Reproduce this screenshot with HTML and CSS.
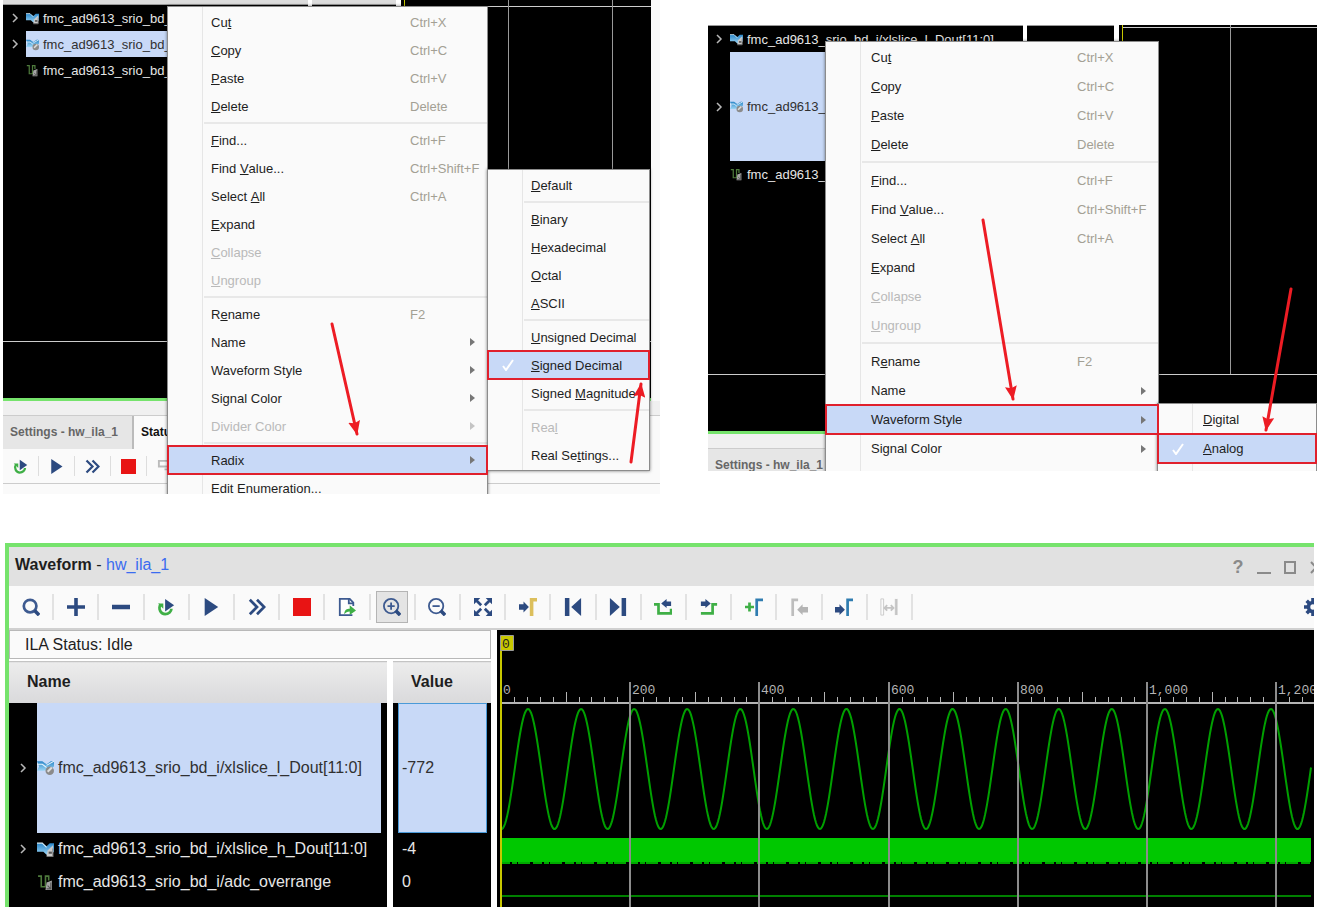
FILE: index.html
```html
<!DOCTYPE html>
<html lang="en">
<head>
    <meta charset="UTF-8">
    <meta name="viewport" content="width=device-width, initial-scale=1.0">
    <title>Waveform - hw_ila_1</title>
    <link rel="stylesheet" href="styles.css">
</head>
<body>
    <!-- Shared icons -->
    <svg class="defs" width="0" height="0" aria-hidden="true">
        <defs>
            <marker id="head" viewBox="0 0 14 12" markerWidth="14" markerHeight="12" refX="13" refY="6" orient="auto" markerUnits="userSpaceOnUse">
                <path d="M0 0 14 6 0 12 2 6z" fill="#ed1c24"/>
            </marker>
            <linearGradient id="blue" x1="0" y1="0" x2="0" y2="1">
                <stop offset="0" stop-color="#2a86c8"/>
                <stop offset="1" stop-color="#9ad4f4"/>
            </linearGradient>
        </defs>
        <symbol id="bus" viewBox="0 0 16 16">
            <path d="M0 2h5l4 3 3-3h4v8l-3 3H9L6 10H0z" fill="url(#blue)"/>
            <path d="M0 2h5l4 4" fill="none" stroke="#d8effa"/>
            <path d="M10 9l5-5v10h-6z" fill="#c9c9c9"/>
            <path d="M9 14.500h6V7" fill="none" stroke="#777"/>
            <path d="M11 11h3" stroke="#555" stroke-width="2"/>
        </symbol>
        <symbol id="bus-on" viewBox="0 0 16 16">
            <path d="M0 2h5l4 3 4-3h3v5l-5 3-5 1H0l2-4z" fill="url(#blue)"/>
            <path d="M0 5h5l4 3M9 6l7-4" fill="none" stroke="#e6f4fc"/>
            <circle cx="12" cy="11" r="4" fill="#8b8b8b"/>
            <path d="M10 12l4-4" stroke="#ddd" stroke-width="2"/>
        </symbol>
        <symbol id="net" viewBox="0 0 16 16">
            <path d="M1 2h3v10h4V2h3v4" fill="none" stroke="#4e7a3c" stroke-width="1.500"/>
            <path d="M9 8l5-2v9H8z" fill="#a6a6a6"/>
            <path d="M10 11l3 3M13 8v6H9" stroke="#555" fill="none"/>
        </symbol>
        <symbol id="chev" viewBox="0 0 8 12">
            <path d="M2 2l4 4-4 4" fill="none" stroke="#b8b8b8" stroke-width="1.500"/>
        </symbol>
        <symbol id="check" viewBox="0 0 12 12">
            <path d="M1 7l3 4 7-10" fill="none" stroke="#fff" stroke-width="2"/>
        </symbol>
        <symbol id="rerun" viewBox="0 0 20 20">
            <path d="M4 7C1 12 4 18 9 18c4 0 7-3 7-6" fill="none" stroke="#3faf46" stroke-width="3"/>
            <path d="M1 6h6v6z" fill="#3faf46"/>
            <path d="M9 1l10 7-10 7z" fill="#2c4a80"/>
        </symbol>
        <symbol id="run" viewBox="0 0 20 20"><path d="M3 0l15 10L3 20z" fill="#2c4a80"/></symbol>
        <symbol id="fast" viewBox="0 0 20 20">
            <path d="M2 2l8 8-8 8M10 2l8 8-8 8" fill="none" stroke="#2c4a80" stroke-width="3"/>
        </symbol>
        <symbol id="stop" viewBox="0 0 20 20"><path d="M0 0h20v20H0z" fill="#e81414"/></symbol>
    </svg>

    <main class="page">
        <div class="shots">
            <!-- Radix menu -->
            <section class="shot shot-radix">
                <div class="scope">
                    <div class="scope-body">
                        <div class="names">
                            <div class="col-head"></div>
                            <div class="signal">
                                <button class="expand" aria-label="Expand"><svg><use href="#chev"/></svg></button>
                                <div class="label"><svg><use href="#bus"/></svg>fmc_ad9613_srio_bd_i</div>
                            </div>
                            <div class="signal">
                                <button class="expand" aria-label="Expand"><svg><use href="#chev"/></svg></button>
                                <div class="label selected"><svg><use href="#bus-on"/></svg>fmc_ad9613_srio_bd_i</div>
                            </div>
                            <div class="signal">
                                <span class="expand"></span>
                                <div class="label"><svg><use href="#net"/></svg>fmc_ad9613_srio_bd_i</div>
                            </div>
                        </div>
                        <div class="values"><div class="col-head"></div></div>
                        <svg class="trace">
                            <path d="M3 6.500H300" stroke="#ccc"/>
                            <path d="M107.500 0V341M211.500 0V341" stroke="#999"/>
                            <path d="M3.500 0V341" stroke="#c8c800"/>
                        </svg>
                    </div>
                    <div class="scope-foot"></div>
                </div>
                <div class="splitter"></div>
                <div class="tabs">
                    <a class="tab" href="#settings">Settings - hw_ila_1</a>
                    <a class="tab active" href="#status">Status - hw_ila_1</a>
                </div>
                <div class="mini-bar">
                    <button aria-label="Run trigger"><svg><use href="#rerun"/></svg></button>
                    <button aria-label="Run"><svg><use href="#run"/></svg></button>
                    <button aria-label="Run immediate"><svg><use href="#fast"/></svg></button>
                    <button aria-label="Stop"><svg><use href="#stop"/></svg></button>
                    <button aria-label="Export"><svg viewBox="0 0 16 16"><path d="M2 2h10v6H2zM8 11h6" fill="none" stroke="#bbb" stroke-width="2"/></svg></button>
                </div>

                <div class="menu menu-radix" role="menu">
                    <button role="menuitem">Cu<u>t</u><kbd>Ctrl+X</kbd></button>
                    <button role="menuitem"><u>C</u>opy<kbd>Ctrl+C</kbd></button>
                    <button role="menuitem"><u>P</u>aste<kbd>Ctrl+V</kbd></button>
                    <button role="menuitem"><u>D</u>elete<kbd>Delete</kbd></button>
                    <hr>
                    <button role="menuitem"><u>F</u>ind...<kbd>Ctrl+F</kbd></button>
                    <button role="menuitem">Find&nbsp;<u>V</u>alue...<kbd>Ctrl+Shift+F</kbd></button>
                    <button role="menuitem">Select&nbsp;<u>A</u>ll<kbd>Ctrl+A</kbd></button>
                    <button role="menuitem"><u>E</u>xpand</button>
                    <button role="menuitem" disabled><u>C</u>ollapse</button>
                    <button role="menuitem" disabled><u>U</u>ngroup</button>
                    <hr>
                    <button role="menuitem">R<u>e</u>name<kbd>F2</kbd></button>
                    <button role="menuitem">Name<i class="more"></i></button>
                    <button role="menuitem">Waveform Style<i class="more"></i></button>
                    <button role="menuitem">Signal Color<i class="more"></i></button>
                    <button role="menuitem" disabled>Divider Color<i class="more"></i></button>
                    <hr>
                    <button role="menuitem" class="marked">Radix<i class="more"></i></button>
                    <button role="menuitem">Edit Enumeration...</button>
                </div>
                <div class="menu submenu-radix" role="menu">
                    <button role="menuitem"><u>D</u>efault</button>
                    <hr>
                    <button role="menuitem"><u>B</u>inary</button>
                    <button role="menuitem"><u>H</u>exadecimal</button>
                    <button role="menuitem"><u>O</u>ctal</button>
                    <button role="menuitem"><u>A</u>SCII</button>
                    <hr>
                    <button role="menuitem"><u>U</u>nsigned Decimal</button>
                    <button role="menuitem" class="marked"><svg class="tick"><use href="#check"/></svg><u>S</u>igned Decimal</button>
                    <button role="menuitem">Signed&nbsp;<u>M</u>agnitude</button>
                    <hr>
                    <button role="menuitem" disabled>Rea<u>l</u></button>
                    <button role="menuitem">Real Se<u>t</u>tings...</button>
                </div>
                <svg class="arrows">
                    <path d="M329 324L354 434"/>
                    <path d="M628 462L638 384"/>
                </svg>
            </section>

            <!-- Waveform Style menu -->
            <section class="shot shot-style">
                <div class="scope">
                    <div class="scope-body">
                        <div class="names">
                            <div class="col-head"></div>
                            <div class="signal">
                                <button class="expand" aria-label="Expand"><svg><use href="#chev"/></svg></button>
                                <div class="label"><svg><use href="#bus"/></svg>fmc_ad9613_srio_bd_i/xlslice_l_Dout[11:0]</div>
                            </div>
                            <div class="signal tall">
                                <button class="expand" aria-label="Expand"><svg><use href="#chev"/></svg></button>
                                <div class="label selected"><svg><use href="#bus-on"/></svg>fmc_ad9613_srio_bd_i</div>
                            </div>
                            <div class="signal">
                                <span class="expand"></span>
                                <div class="label"><svg><use href="#net"/></svg>fmc_ad9613_srio_bd_i</div>
                            </div>
                        </div>
                        <div class="values"><div class="col-head"></div></div>
                        <svg class="trace">
                            <path d="M3 2.500H300" stroke="#ccc"/>
                            <path d="M111.500 0V349" stroke="#999"/>
                            <path d="M3.500 0V349" stroke="#c8c800"/>
                        </svg>
                    </div>
                    <div class="scope-foot"></div>
                </div>
                <div class="splitter"></div>
                <div class="tabs">
                    <a class="tab" href="#settings">Settings - hw_ila_1</a>
                </div>

                <div class="menu menu-style" role="menu">
                    <button role="menuitem">Cu<u>t</u><kbd>Ctrl+X</kbd></button>
                    <button role="menuitem"><u>C</u>opy<kbd>Ctrl+C</kbd></button>
                    <button role="menuitem"><u>P</u>aste<kbd>Ctrl+V</kbd></button>
                    <button role="menuitem"><u>D</u>elete<kbd>Delete</kbd></button>
                    <hr>
                    <button role="menuitem"><u>F</u>ind...<kbd>Ctrl+F</kbd></button>
                    <button role="menuitem">Find&nbsp;<u>V</u>alue...<kbd>Ctrl+Shift+F</kbd></button>
                    <button role="menuitem">Select&nbsp;<u>A</u>ll<kbd>Ctrl+A</kbd></button>
                    <button role="menuitem"><u>E</u>xpand</button>
                    <button role="menuitem" disabled><u>C</u>ollapse</button>
                    <button role="menuitem" disabled><u>U</u>ngroup</button>
                    <hr>
                    <button role="menuitem">R<u>e</u>name<kbd>F2</kbd></button>
                    <button role="menuitem">Name<i class="more"></i></button>
                    <button role="menuitem" class="marked">Waveform Style<i class="more"></i></button>
                    <button role="menuitem">Signal Color<i class="more"></i></button>
                </div>
                <div class="menu submenu-style" role="menu">
                    <button role="menuitem"><u>D</u>igital</button>
                    <button role="menuitem" class="marked"><svg class="tick"><use href="#check"/></svg><u>A</u>nalog</button>
                </div>
                <svg class="arrows">
                    <path d="M275 195L305 374"/>
                    <path d="M583 264L558 405"/>
                </svg>
            </section>
        </div>

        <!-- Waveform window -->
        <section class="window">
            <header class="titlebar">
                <h1>Waveform <span>-</span> <a href="#hw_ila_1">hw_ila_1</a></h1>
                <div class="win-buttons">
                    <button aria-label="Help">?</button>
                    <button aria-label="Minimize"><svg viewBox="0 0 14 14"><path d="M0 12h14" stroke-width="2"/></svg></button>
                    <button aria-label="Maximize"><svg viewBox="0 0 14 14"><path d="M2 1h10v11H2z" stroke-width="2"/></svg></button>
                    <button aria-label="Close"><svg viewBox="0 0 14 14"><path d="M2 1l10 11M12 1L2 12" stroke-width="2"/></svg></button>
                </div>
            </header>
            <div class="toolbar">
                <div class="tools">
                    <button aria-label="Find"><svg viewBox="0 0 20 20"><circle cx="9" cy="9" r="7" fill="none" stroke="#3d5a90" stroke-width="3"/><path d="M14 14l5 5" stroke="#2c4a80" stroke-width="4"/></svg></button>
                    <button aria-label="Add"><svg viewBox="0 0 20 20"><path d="M0 10h20M10 0v20" stroke="#2c4a80" stroke-width="4"/></svg></button>
                    <button aria-label="Remove"><svg viewBox="0 0 20 20"><path d="M0 10h20" stroke="#2c4a80" stroke-width="5"/></svg></button>
                    <button aria-label="Run trigger"><svg><use href="#rerun"/></svg></button>
                    <button aria-label="Run"><svg><use href="#run"/></svg></button>
                    <button aria-label="Run immediate"><svg><use href="#fast"/></svg></button>
                    <button aria-label="Stop"><svg><use href="#stop"/></svg></button>
                    <button aria-label="Export"><svg viewBox="0 0 20 20"><path d="M17 9V5l-4-4H2v18h14" fill="#fff" stroke="#3d5a90" stroke-width="2"/><path d="M12 1v5h5" fill="none" stroke="#3d5a90" stroke-width="2"/><path d="M7 18c0-5 3-6 6-6V8l7 6-7 5v-4c-3 0-4 1-6 3z" fill="#3faf46"/></svg></button>
                    <button aria-label="Zoom in" class="pressed"><svg viewBox="0 0 20 20"><circle cx="9" cy="9" r="8" fill="none" stroke="#3d5a90" stroke-width="2"/><path d="M14 14l5 5" stroke="#2c4a80" stroke-width="4"/><path d="M5 9h8M9 5v8" stroke="#3d5a90" stroke-width="2"/></svg></button>
                    <button aria-label="Zoom out"><svg viewBox="0 0 20 20"><circle cx="9" cy="9" r="8" fill="none" stroke="#3d5a90" stroke-width="2"/><path d="M14 14l5 5" stroke="#2c4a80" stroke-width="4"/><path d="M5 9h8" stroke="#3d5a90" stroke-width="2"/></svg></button>
                    <button aria-label="Zoom fit"><svg viewBox="0 0 20 20"><path d="M0 0h7L0 7zM20 0v7l-7-7zM0 20v-7l7 7zM20 20h-7l7-7z" fill="#2c4a80"/><path d="M3 3l5 5M17 3l-5 5M3 17l5-5M17 17l-5-5" stroke="#2c4a80" stroke-width="3"/></svg></button>
                    <button aria-label="Go to trigger"><svg viewBox="0 0 20 20"><path d="M0 7h5V4l6 6-6 6v-3H0z" fill="#2c4a80"/><path d="M14 20V2h6" fill="none" stroke="#dcbf5c" stroke-width="4"/></svg></button>
                    <button aria-label="First sample"><svg viewBox="0 0 20 20"><path d="M1 0h5v20H1zM19 0v20L8 10z" fill="#2c4a80"/></svg></button>
                    <button aria-label="Last sample"><svg viewBox="0 0 20 20"><path d="M14 0h5v20h-5zM1 0v20l11-10z" fill="#2c4a80"/></svg></button>
                    <button aria-label="Previous transition"><svg viewBox="0 0 20 20"><path d="M0 7h5v10h14v-5" fill="none" stroke="#3faf46" stroke-width="3"/><path d="M19 4h-5V1L8 6l6 5V9h5z" fill="#2c4a80"/></svg></button>
                    <button aria-label="Next transition"><svg viewBox="0 0 20 20"><path d="M1 17h13V7h5" fill="none" stroke="#3faf46" stroke-width="3"/><path d="M1 4h5V1l6 5-6 5V9H1z" fill="#2c4a80"/></svg></button>
                    <button aria-label="Add marker"><svg viewBox="0 0 20 20"><path d="M0 10h10M5 5v10" stroke="#3faf46" stroke-width="3"/><path d="M13 20V2h7" fill="none" stroke="#2f7cb0" stroke-width="3"/></svg></button>
                    <button aria-label="Previous marker" disabled><svg viewBox="0 0 20 20"><path d="M3 20V2h6" fill="none" stroke="#bdbdbd" stroke-width="3"/><path d="M20 10h-6V7l-6 6 6 6v-3h6z" fill="#b4b4b4"/></svg></button>
                    <button aria-label="Next marker"><svg viewBox="0 0 20 20"><path d="M0 10h5V7l6 6-6 6v-3H0z" fill="#2c4a80"/><path d="M14 20V2h6" fill="none" stroke="#2f7cb0" stroke-width="3"/></svg></button>
                    <button aria-label="Swap markers" disabled><svg viewBox="0 0 20 20"><path d="M1 1h3v18H1zM17 1v18M19 1v18" fill="none" stroke="#c8c8c8"/><path d="M6 11h9M8 8l-3 3 3 3M12 8l3 3-3 3M18 1v18" fill="none" stroke="#c4c4c4" stroke-width="2"/></svg></button>
                </div>
                <button class="gear" aria-label="Settings"><svg viewBox="0 0 20 20"><circle cx="10" cy="10" r="5" fill="none" stroke="#2c4a80" stroke-width="4"/><path d="M10 0v4M10 16v4M0 10h4M16 10h4M3 3l3 3M14 14l3 3M3 17l3-3M14 6l3-3" stroke="#2c4a80" stroke-width="4"/></svg></button>
            </div>
            <div class="viewer">
                <div class="side">
                    <p class="status">ILA Status: Idle</p>
                    <table class="signals">
                        <thead>
                            <tr><th class="name">Name</th><th>Value</th></tr>
                        </thead>
                        <tbody>
                            <tr class="analog">
                                <td class="name">
                                    <div class="signal">
                                        <button class="expand" aria-label="Expand"><svg><use href="#chev"/></svg></button>
                                        <div class="label selected"><svg><use href="#bus-on"/></svg>fmc_ad9613_srio_bd_i/xlslice_l_Dout[11:0]</div>
                                    </div>
                                </td>
                                <td><div class="value selected">-772</div></td>
                            </tr>
                            <tr>
                                <td class="name">
                                    <div class="signal">
                                        <button class="expand" aria-label="Expand"><svg><use href="#chev"/></svg></button>
                                        <div class="label"><svg><use href="#bus"/></svg>fmc_ad9613_srio_bd_i/xlslice_h_Dout[11:0]</div>
                                    </div>
                                </td>
                                <td><div class="value">-4</div></td>
                            </tr>
                            <tr>
                                <td class="name">
                                    <div class="signal">
                                        <span class="expand"></span>
                                        <div class="label"><svg><use href="#net"/></svg>fmc_ad9613_srio_bd_i/adc_overrange</div>
                                    </div>
                                </td>
                                <td><div class="value">0</div></td>
                            </tr>
                            <tr class="rest"><td class="name"></td><td></td></tr>
                        </tbody>
                    </table>
                </div>
                <svg class="plot" id="plot"></svg>
            </div>
        </section>
    </main>

    <script src="plot.js"></script>
</body>
</html>
```
FILE: styles.css
```css
* {
    box-sizing: border-box;
}
body {
    margin: 0;
    background: #fff;
    font-family: "Liberation Sans", Arial, sans-serif;
    font-size: 13px;
    color: #1e1e1e;
}
button {
    padding: 0;
    border: none;
    background: none;
    font: inherit;
    color: inherit;
}
a {
    text-decoration: none;
}
.defs {
    position: absolute;
}
.page {
    padding: 0 4px 0 3px;
}
.shots {
    display: grid;
    grid-template-columns: 657fr 609fr;
    gap: 48px;
}
.shot {
    position: relative;
    overflow: hidden;
    background: #fafafa;
}
.shot-radix {
    height: 494px;
}
.shot-style {
    height: 446px;
    margin-top: 25px;
}

/* black signal area */
.scope {
    background: #000;
    border-bottom: 3px solid #76e36c;
}
.shot-radix .scope {
    margin-right: 9px;
}
.scope-body {
    display: flex;
    height: 342px;
    border-bottom: 1px solid #ccc;
}
.shot-style .scope-body {
    height: 350px;
}
.scope-foot {
    height: 56px;
}
.names {
    flex: 0 0 309px;
    border-right: 4px solid #fff;
    overflow: hidden;
}
.values {
    flex: 0 0 89px;
    border-right: 5px solid #fff;
}
.shot-style .names {
    flex-basis: 319px;
}
.shot-style .values {
    flex-basis: 92px;
}
.col-head {
    height: 5px;
    background: #dcdcdc;
    border-bottom: 1px solid #999;
}
.shot-style .col-head {
    height: 1px;
}
.trace {
    flex: 1;
    min-width: 0;
    height: 100%;
}
.signal {
    display: flex;
    height: 26px;
}
.signal.tall {
    height: 109px;
}
.expand {
    flex: 0 0 23px;
    display: flex;
    align-items: center;
    justify-content: center;
}
.expand svg {
    width: 8px;
    height: 12px;
}
.label {
    flex: 1;
    display: flex;
    align-items: center;
    gap: 4px;
    color: #e6e6e6;
    white-space: nowrap;
}
.label svg {
    width: 13px;
    height: 13px;
}
.shot-style .expand {
    flex-basis: 22px;
}
.selected {
    background: #c8d9f7;
    color: #303030;
}

/* tabs under the scope */
.splitter {
    height: 14px;
    background: #f0f0f0;
}
.tabs {
    display: flex;
    border-top: 1px solid #ccc;
}
.tab {
    padding: 0 14px 0 7px;
    border-right: 2px solid #bbb;
    background: #e6e6e6;
    color: #666;
    font-size: 12px;
    font-weight: bold;
    line-height: 33px;
    white-space: nowrap;
}
.tab.active {
    border: none;
    background: #fafafa;
    color: #111;
}
.mini-bar {
    display: flex;
    align-items: center;
    height: 35px;
    border-bottom: 1px solid #ccc;
}
.mini-bar button {
    display: flex;
    justify-content: center;
    width: 36px;
    height: 20px;
    align-items: center;
    border-right: 1px solid #ddd;
}
.mini-bar svg {
    width: 15px;
    height: 15px;
}

/* context menus */
.menu {
    position: absolute;
    padding: 1px 0;
    border: 1px solid #8c8c8c;
    background: #fafafa linear-gradient(to right, transparent 34px, #e6e6e6 34px 35px, transparent 35px);
    box-shadow: 0 0 3px rgba(0, 0, 0, 0.5);
}
.menu button {
    position: relative;
    display: flex;
    align-items: center;
    width: 100%;
    height: 28px;
    padding: 0 12px 0 43px;
    text-align: left;
    white-space: nowrap;
}
.menu-style button,
.submenu-style button {
    height: 29px;
    padding-left: 45px;
}
.menu button:disabled {
    color: #b9b9b9;
}
.menu hr {
    height: 2px;
    margin: 2px 0 2px 36px;
    border: none;
    background: #e8e8e8;
}
.menu-style hr {
    margin-bottom: 3px;
}
.menu kbd {
    width: 65px;
    margin-left: auto;
    font: inherit;
    color: #a3a094;
}
.menu-style kbd {
    width: 69px;
}
.more {
    margin-left: auto;
    border: 4px solid transparent;
    border-left: 5px solid #777;
    border-right: none;
}
button:disabled .more {
    border-left-color: #c4c4c4;
}
.menu .marked {
    background: #c8d9f7;
    outline: 2px solid #e0202c;
    outline-offset: -1px;
    z-index: 1;
}
.tick {
    position: absolute;
    left: 14px;
    width: 12px;
    height: 12px;
}
.menu-radix {
    top: 6px;
    left: 164px;
    width: 321px;
    height: 520px;
}
.submenu-radix {
    top: 169px;
    left: 484px;
    width: 163px;
}
.menu-style {
    top: 16px;
    left: 117px;
    width: 334px;
    height: 500px;
}
.submenu-style {
    top: 378px;
    left: 449px;
    right: 0;
    height: 100px;
}
.arrows {
    position: absolute;
    inset: 0;
    z-index: 2;
    width: 100%;
    height: 100%;
    fill: none;
    stroke: #ed1c24;
    stroke-width: 3;
    stroke-linecap: round;
    pointer-events: none;
}
.arrows path {
    marker-end: url(#head);
}

/* waveform window */
.window {
    margin: 49px 3px 0 2px;
    border-top: 4px solid #76e36c;
    border-left: 4px solid #76e36c;
    overflow: hidden;
    font-size: 16px;
}
.titlebar {
    display: flex;
    align-items: center;
    justify-content: space-between;
    height: 39px;
    padding-left: 6px;
    background: #e1e1e1;
}
.titlebar h1 {
    margin: 0 0 4px;
    font-size: 16px;
}
.titlebar span,
.titlebar a {
    font-weight: normal;
}
.titlebar a {
    color: #3a6cf0;
}
.win-buttons {
    display: flex;
    gap: 12px;
    margin-right: -9px;
    padding-top: 2px;
    color: #8a8a8a;
    font-size: 18px;
    font-weight: bold;
}
.win-buttons button {
    width: 14px;
}
.win-buttons svg {
    display: block;
    width: 14px;
    height: 14px;
    fill: none;
    stroke: #8a8a8a;
}
.toolbar {
    display: flex;
    align-items: center;
    justify-content: space-between;
    height: 44px;
    border-bottom: 2px solid #d0d0d0;
    background: #fafafa;
}
.tools {
    display: flex;
    flex: 0 1 904px;
}
.tools button {
    flex: 1;
    display: flex;
    align-items: center;
    justify-content: center;
    height: 26px;
    border-right: 2px solid #e2e2e2;
}
.tools svg,
.gear svg {
    flex: none;
    width: 18px;
    height: 18px;
}
.tools .pressed svg {
    width: 32px;
    height: 32px;
    padding: 6px;
    border: 1px solid #b4b4b4;
    background: #e4e4e4;
}
.gear {
    flex: none;
    margin-right: -8px;
}
.gear svg {
    display: block;
}
.viewer {
    display: flex;
    gap: 6px;
}
.side {
    flex: 0 0 482px;
}
.status {
    margin: 0 0 2px;
    padding-left: 15px;
    border: 1px solid #b8b8b8;
    background: #fafafa;
    line-height: 27px;
}
.signals {
    width: 100%;
    border-collapse: collapse;
    table-layout: fixed;
}
.signals th {
    height: 41px;
    padding: 0 18px;
    border-top: 1px solid #c4c4c4;
    background: linear-gradient(#ececec, #d9d9db);
    text-align: left;
}
.signals td {
    padding: 0;
    background: #000;
    color: #e6e6e6;
}
.signals .name {
    width: 381px;
    border-right: 6px solid #fff;
}
.signals .signal {
    height: 33px;
    padding-right: 6px;
}
.signals .expand {
    flex-basis: 28px;
}
.signals .label svg {
    width: 17px;
    height: 17px;
}
.value {
    display: flex;
    align-items: center;
    height: 33px;
    margin: 0 4px 0 5px;
    padding-left: 4px;
}
.value.selected {
    border: 1px solid #4a9ad8;
    padding-left: 3px;
}
.signals .analog .signal,
.analog .value {
    height: 130px;
}
.rest td {
    height: 8px;
}
.plot {
    flex: 1;
    min-width: 0;
    height: 277px;
    background: #000;
    font: 13px "Liberation Mono", monospace;
}
```
FILE: plot.js
```js
var plot = document.getElementById('plot');
var width = plot.clientWidth;
var end = width - 3;
var zero = 4;
var perSample = 0.646;
var out = '';

// sampled sine on the first channel
var points = [];
for (var x = zero; x <= end; x++) {
    var y = 139 - 60 * Math.cos((x - 31) / 53.07 * 2 * Math.PI);
    points.push(x + ' ' + y.toFixed(1));
}
out += '<path d="M' + points.join('L') + '" fill="none" stroke="#00a000" stroke-width="2"/>';

// second channel is dense enough to fill its lane
out += '<path d="M' + zero + ' 208H' + end + 'V232H' + zero + 'z" fill="#00c800"/>';
out += '<path d="M' + zero + ' 233H' + end + '" stroke="#00a800" stroke-width="2" stroke-dasharray="9 2 5 1 12 3"/>';
out += '<path d="M' + zero + ' 266H' + end + '" stroke="#008000" stroke-width="2"/>';

// ruler
out += '<path d="M' + zero + ' 73H' + width + '" stroke="#b4b4b4" stroke-width="2"/>';
for (var s = 0; zero + s * perSample < width; s += 20) {
    var pos = Math.round(zero + s * perSample);
    if (s % 200 === 0) {
        if (s > 0) {
            out += '<path d="M' + pos + ' 52V277" stroke="#8c8c8c" stroke-width="2"/>';
        }
        out += '<text x="' + (pos + 2) + '" y="64" fill="#b4b4b4">' + s.toLocaleString('en-US') + '</text>';
    } else {
        out += '<path d="M' + (pos + 0.5) + ' ' + (s % 100 === 0 ? 62 : 67) + 'V73" stroke="#b4b4b4"/>';
    }
}

// cursor
out += '<path d="M4 6V277" stroke="#c8c800" stroke-width="2"/>';
out += '<path d="M3.5 5.500h13v15h-13z" fill="#c8c800" stroke="#999"/>';
out += '<text x="5" y="18" fill="#222">0</text>';

plot.innerHTML = out;
```
